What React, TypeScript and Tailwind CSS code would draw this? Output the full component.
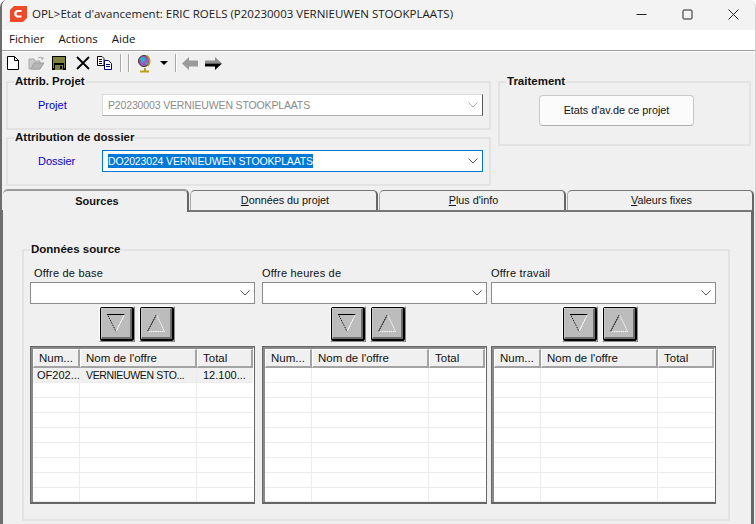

const arial = "font-['Liberation_Sans',Arial,sans-serif]";
const segoe = "font-['Open_Sans','Noto_Sans',sans-serif]";

function Group({ title, className, children, labelLeft = "left-[6px]" }: { title: string; className: string; children?: React.ReactNode; labelLeft?: string }) {
  return (
    <div className={`relative border-2 border-[#e3e3e3] ${className}`}>
      <span className={`absolute -top-[9px] ${labelLeft} bg-[#f0f0f0] px-[1px] text-[11.5px] leading-[14px] font-bold text-[#111]`}>{title}</span>
      {children}
    </div>
  );
}

function Chevron({ color = "#555" }: { color?: string }) {
  return (
    <svg width="10" height="6" viewBox="0 0 10 6" className="shrink-0">
      <path d="M0.5 0.5 L5 5 L9.5 0.5" fill="none" stroke={color} strokeWidth="1" />
    </svg>
  );
}

function Select({ className = "", children, chevron }: { className?: string; children?: React.ReactNode; chevron?: string }) {
  return (
    <div className={`flex items-center justify-between bg-white pr-[4px] ${className}`}>
      <div className="min-w-0 flex-1 text-[10.5px] leading-[14px] tracking-[-0.15px] whitespace-nowrap">{children}</div>
      <Chevron color={chevron} />
    </div>
  );
}

function TriButton({ up }: { up?: boolean }) {
  return (
    <div className="h-[36px] w-[36px] border-[1px] border-t-white border-l-white border-r-[#8a8a8a] border-b-[#8a8a8a]">
      <div className="h-full w-full rounded-[2px] border-[2px] border-black border-t-[1px] border-l-[1px]">
        <div className="flex h-full w-full items-center justify-center border-[1px] border-r-[2px] border-b-[2px] border-t-[#c8c8c8] border-l-[#c8c8c8] border-r-[#6c6c6c] border-b-[#6c6c6c] bg-[#bcbcbc]">
          <svg width="20" height="20" viewBox="0 0 20 20" className="shrink-0">
            {up ? (
              <>
                <path d="M10.5 1.5 L1.5 18.5" stroke="#000" strokeWidth="1" strokeDasharray="2 0.5" fill="none" />
                <path d="M10.5 1.5 L18.5 18.5 L1.5 18.5" stroke="#fff" strokeWidth="1" strokeDasharray="1.5 0.7" fill="none" />
              </>
            ) : (
              <>
                <path d="M1 1.5 L19 1.5" stroke="#000" strokeWidth="1" fill="none" />
                <path d="M1.5 1.5 L10 18.5" stroke="#000" strokeWidth="1" strokeDasharray="1 1" fill="none" />
                <path d="M18.5 1.5 L10 18.5" stroke="#fff" strokeWidth="1" fill="none" />
              </>
            )}
          </svg>
        </div>
      </div>
    </div>
  );
}

function Offer({ title, width, rows, btnLeft, className = "", labelPad = "pl-[0px]" }: { title: string; width: string; rows?: boolean; btnLeft: string; className?: string; labelPad?: string }) {
  return (
    <div className={`flex shrink-0 flex-col ${width} ${className}`}>
      <div className={`h-[17px] ${labelPad} pt-[1px] text-[11px] leading-[14px] text-[#111] tracking-[0.2px]`}>{title}</div>
      <Select className="h-[22px] border border-[#8c8c8c]" />
      <div className={`mt-[2px] flex gap-[4px] ${btnLeft}`}>
        <TriButton />
        <TriButton up />
      </div>
      <div className="mt-[4px] flex h-[158px] flex-col border-[1px] border-[#666] border-b-[2px] bg-white">
        <div className="flex h-full flex-col border-l-[2px] border-t-[2px] border-r-[1px] border-l-[#8a8a8a] border-t-[#8a8a8a] border-r-white">
          <div className="flex h-[19px] shrink-0 text-[11.5px] leading-[17px] text-[#111]">
            {[
              ["w-[47px] pl-[5px]", "Num..."],
              ["w-[117px] pl-[5px]", "Nom de l'offre"],
              ["flex-1 pl-[5px]", "Total"],
            ].map(([c, t]) => (
              <div key={t} className={`${c} border-t border-l border-t-white border-l-white border-r-[2px] border-b-[2px] border-r-[#a3a3a3] border-b-[#a3a3a3] bg-[#f0f0f0]`}>{t}</div>
            ))}
          </div>
          {Array.from({ length: 9 }).map((_, i) => (
            <div key={i} className={`flex ${i === 8 ? "h-[14px]" : "h-[15px]"} shrink-0 border-b border-[#ececec] text-[11px] leading-[15px] text-[#111] whitespace-nowrap ${rows && i === 0 ? "bg-[#f0f0f0]" : ""}`}>
              <div className="w-[47px] border-r border-[#ececec] pl-[4px]">{rows && i === 0 ? "OF202..." : ""}</div>
              <div className="w-[117px] border-r border-[#ececec] pl-[6px] text-[10.5px] tracking-[-0.35px]">{rows && i === 0 ? "VERNIEUWEN STO..." : ""}</div>
              <div className="flex-1 pl-[6px]">{rows && i === 0 ? "12.100..." : ""}</div>
            </div>
          ))}
        </div>
      </div>
    </div>
  );
}

function Tab({ width, children, active }: { width: string; children: React.ReactNode; active?: boolean }) {
  if (active) {
    return (
      <div className={`${width} relative z-10 -mb-[2px] h-[23px] rounded-t-[5px] border-t-[2px] border-r-[2px] border-t-[#9b9b9b] border-r-[#666] bg-[#f0f0f0] pt-[3px] pl-[4px] text-center text-[11px] leading-[14px] font-bold text-[#111]`}>
        {children}
      </div>
    );
  }
  return (
    <div className={`${width} h-[20px] rounded-t-[5px] border-t-[1px] border-l-[1px] border-r-[2px] border-t-[#777] border-l-[#aaa] border-r-[#666] bg-[#f0f0f0] pl-[3px] pt-[2px] text-center text-[10.8px] leading-[14px] text-[#111]`}>
      {children}
    </div>
  );
}

function ToolIcons() {
  return (
    <div className="flex h-[24px] items-center pb-[2px]">
      <svg width="14" height="16" viewBox="0 0 14 16" className="ml-[6px]">
        <path d="M1.5 1.5 H8.5 L12.5 5.5 V14.5 H1.5 Z" fill="#fff" stroke="#000" />
        <path d="M8.5 1.5 V5.5 H12.5" fill="none" stroke="#000" />
      </svg>
      <svg width="17" height="14" viewBox="0 0 17 14" className="ml-[8px]">
        <path d="M1 3 H6 L7 5 H12 V13 H1 Z" fill="#c9c9c9" stroke="#a8a8a8" />
        <path d="M3 13 L6 7 H16 L12 13 Z" fill="#b5b5b5" stroke="#a0a0a0" />
        <path d="M10 2 Q13 0 15 3 M15 3 L15 1 M15 3 L13 3" fill="none" stroke="#a8a8a8" />
      </svg>
      <svg width="14" height="14" viewBox="0 0 14 14" className="ml-[7px]">
        <rect x="0" y="0" width="14" height="14" fill="#000" />
        <rect x="2" y="1" width="10" height="6" fill="#808040" />
        <rect x="3" y="9" width="8" height="5" fill="#808040" />
        <rect x="8" y="10" width="2" height="3" fill="#000" />
        <rect x="1" y="1" width="1" height="11" fill="#808040" />
        <rect x="12" y="1" width="1" height="11" fill="#808040" />
      </svg>
      <svg width="14" height="14" viewBox="0 0 14 14" className="ml-[10px]">
        <path d="M1 1 L13 13 M13 1 L1 13" stroke="#000" strokeWidth="1.8" />
      </svg>
      <svg width="15" height="14" viewBox="0 0 15 14" className="ml-[7px]">
        <path d="M0.5 0.5 H5 L7 2.5 V9.5 H0.5 Z" fill="#fff" stroke="#000" />
        <path d="M2 3.5 H5 M2 5.5 H5 M2 7.5 H5" stroke="#000" />
        <path d="M7.5 4.5 H11.5 L14.5 7.5 V13.5 H7.5 Z" fill="#fff" stroke="#000080" />
        <path d="M9 8.5 H13 M9 10.5 H13" stroke="#000080" />
      </svg>
      <div className="ml-[8px] h-[18px] w-[2px] border-l border-r border-l-[#a8a8a8] border-r-white" />
      <div className="ml-[6px] h-[18px] w-[2px] border-l border-r border-l-[#a8a8a8] border-r-white" />
      <svg width="14" height="19" viewBox="0 0 14 19" className="ml-[8px]">
        <circle cx="6" cy="7" r="5.5" fill="#a050c8" stroke="#3a3a10" />
        <path d="M2 4 L6 3 L8 6 L4 9 Z" fill="#20b8c8" />
        <path d="M7 9 L10 8 L9 11 Z" fill="#40a8d0" />
        <path d="M9 1.5 Q14 6 10 12" fill="none" stroke="#b8a020" strokeWidth="1.6" />
        <path d="M7 14 V16.5 M2 17.5 H11" stroke="#b8a020" strokeWidth="2" />
      </svg>
      <svg width="8" height="4" viewBox="0 0 8 4" className="ml-[8px]">
        <path d="M0 0 H8 L4 4 Z" fill="#000" />
      </svg>
      <div className="ml-[7px] h-[18px] w-[2px] border-l border-r border-l-[#a8a8a8] border-r-white" />
      <svg width="16" height="13" viewBox="0 0 16 13" className="ml-[5px]">
        <path d="M0 6.5 L7 0 V3.5 H16 V9.5 H7 V13 Z" fill="#9a9a9a" />
      </svg>
      <svg width="17" height="13" viewBox="0 0 17 13" className="ml-[7px]">
        <path d="M17 6.5 L10 0 V3.5 H0 V6.5 Z" fill="#8f8f8f" />
        <path d="M17 6.5 L10 13 V9.5 H0 V6.5 Z" fill="#000" />
      </svg>
    </div>
  );
}

export default function App() {
  return (
    <div className={`${arial} flex h-[524px] w-[756px] flex-col overflow-hidden rounded-t-[7px] border-l-[2px] border-r-[1px] border-l-[#6e6e6e] border-r-[#d0d0d0] bg-[#f0f0f0]`}>
      {/* title bar */}
      <div className="flex h-[30px] shrink-0 items-center bg-[#f3f3f3] pb-[2px]">
        <svg width="17" height="16" viewBox="0 0 17 16" className="ml-[8px]">
          <path d="M4 0 H17 V12 L13 16 H0 V4 Z" fill="#ee4b2b" />
          <path d="M11.5 5 H7 L5.5 6.5 V9 L7 10.5 H11.5" fill="none" stroke="#fff" strokeWidth="2.2" />
        </svg>
        <span className={`${segoe} ml-[5px] text-[11.5px] leading-[16px] text-[#1a1a1a]`}>OPL&gt;Etat d'avancement: ERIC ROELS (P20230003 VERNIEUWEN STOOKPLAATS)</span>
        <div className="ml-auto flex items-center">
          <svg width="11" height="11" viewBox="0 0 11 11" className="mr-[35px]"><path d="M0.5 5.5 H10.5" stroke="#222" /></svg>
          <svg width="11" height="11" viewBox="0 0 11 11" className="mr-[35px]"><rect x="1" y="1" width="9" height="9" rx="1" fill="none" stroke="#222" /></svg>
          <svg width="11" height="11" viewBox="0 0 11 11" className="mr-[16px]"><path d="M0.5 0.5 L10.5 10.5 M10.5 0.5 L0.5 10.5" stroke="#222" /></svg>
        </div>
      </div>
      {/* menu */}
      <div className={`${segoe} flex h-[20px] shrink-0 items-center gap-[14px] bg-white pb-[2px] pl-[7px] text-[11.5px] leading-[16px] text-[#111]`}>
        <span>Fichier</span>
        <span>Actions</span>
        <span>Aide</span>
      </div>
      {/* toolbar */}
      <div className="shrink-0 border-t-[1px] border-[#a0a0a0]">
        <div className="border-t border-white">
          <div className="-ml-[2px]"><ToolIcons /></div>
        </div>
      </div>
      {/* top area */}
      <div className="flex h-[113px] shrink-0 pl-[4px] pt-[5px]">
        <div className="flex w-[485px] flex-col gap-[7px]">
          <Group title="Attrib. Projet" className="h-[49px]">
            <div className="flex items-center pt-[11px]">
              <span className="w-[94px] pl-[30px] text-[11px] leading-[14px] text-[#0000d0]">Projet</span>
              <Select className="h-[22px] w-[381px] border border-[#dcdcdc] border-r-[#555] border-b-[#aaa]" chevron="#b5b5b5">
                <span className="pl-[5px] text-[#8a8a8a]">P20230003 VERNIEUWEN STOOKPLAATS</span>
              </Select>
            </div>
          </Group>
          <Group title="Attribution de dossier" className="h-[49px]">
            <div className="flex items-center pt-[11px]">
              <span className="w-[94px] pl-[30px] text-[11px] leading-[14px] text-[#0000d0]">Dossier</span>
              <Select className="h-[22px] w-[381px] border border-[#0078d7]">
                <span className="ml-[5px] inline-block bg-[#0078d7] text-white">DO2023024 VERNIEUWEN STOOKPLAATS</span>
              </Select>
            </div>
          </Group>
        </div>
        <div className="ml-[7px] w-[253px]">
          <Group title="Traitement" className="flex h-[65px] justify-center pt-[12px]">
            <div className="-ml-[16px] flex h-[31px] w-[155px] items-center justify-center rounded-[4px] border border-[#c8c8c8] border-b-[#b0b0b0] bg-[#fbfbfb] text-[10.8px] text-[#111]">Etats d'av.de ce projet</div>
          </Group>
        </div>
      </div>
      {/* tabs */}
      <div className="flex h-[21px] shrink-0 items-end gap-[1px] pl-[1px]">
        <Tab width="w-[186px]" active>Sources</Tab>
        <Tab width="w-[188px]"><span className="underline">D</span>onnées du projet</Tab>
        <Tab width="w-[187px]"><span className="underline">P</span>lus d'info</Tab>
        <Tab width="w-[187px]"><span className="underline">V</span>aleurs fixes</Tab>
      </div>
      <div className="mr-[1px] flex-1 border-t-[2px] border-r-[3px] border-l-[1px] border-t-[#777] border-r-[#666] border-l-[#6e6e6e] pl-[19px] pr-[21px] pt-[37px]">
        <Group title="Données source" className="h-[272px] pl-[6px] pr-[13px] pt-[14px]">
          <div className="flex">
            <Offer title="Offre de base" width="w-[225px]" rows btnLeft="ml-[69px]" labelPad="pl-[4px]" />
            <Offer title="Offre heures de" width="w-[225px]" btnLeft="ml-[68px]" className="ml-[7px]" />
            <Offer title="Offre travail" width="w-[225px]" btnLeft="ml-[71px]" className="ml-[4px]" />
          </div>
        </Group>
      </div>
    </div>
  );
}
